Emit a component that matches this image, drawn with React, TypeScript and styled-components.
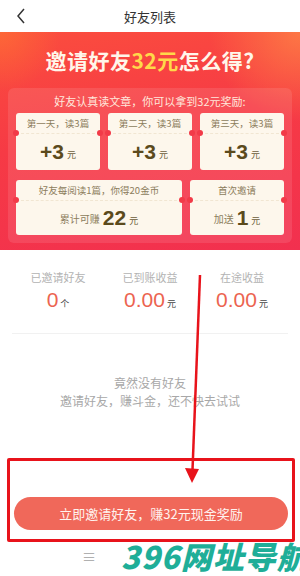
import React from 'react';
import styled, { createGlobalStyle } from 'styled-components';

const GlobalStyle = createGlobalStyle`
  html, body {
    margin: 0;
    padding: 0;
    background: #ffffff;
  }
  body {
    font-family: 'Noto Sans CJK SC', 'Noto Sans', sans-serif;
  }
`;

const Page = styled.div`
  position: relative;
  width: 300px;
  height: 576px;
  overflow: hidden;
  display: flex;
  flex-direction: column;
  background: #ffffff;
`;

const Header = styled.div`
  height: 32px;
  display: flex;
  align-items: center;
  justify-content: center;
  position: relative;
  font-size: 13px;
  color: #333;
`;

const Back = styled.span`
  position: absolute;
  left: 16px;
  top: 6px;
  font-size: 16px;
  color: #333;
`;

const Banner = styled.div`
  height: 218px;
  box-sizing: border-box;
  padding: 14px 8px 7px;
  display: flex;
  flex-direction: column;
  background:
    radial-gradient(circle at 100% 0%, rgba(255, 140, 70, 0.7) 0, rgba(255, 120, 60, 0) 90px),
    radial-gradient(circle at 0% 0%, rgba(255, 120, 50, 0.6) 0, rgba(255, 110, 50, 0) 60px),
    linear-gradient(170deg, #fb4d3e 0%, #f63a45 45%, #f2304f 100%);
`;

const Title = styled.div`
  text-align: center;
  font-size: 21px;
  line-height: 28px;
  font-weight: 700;
  color: #fff6ea;
  letter-spacing: 0.5px;
`;

const Gold = styled.span`
  color: #ffd84a;
`;

const Panel = styled.div`
  margin-top: 14px;
  flex: 1;
  border-radius: 6px;
  background: rgba(255, 255, 255, 0.1);
  padding: 5px 8px 8px;
  display: flex;
  flex-direction: column;
`;

const Sub = styled.div`
  text-align: center;
  font-size: 11px;
  line-height: 16px;
  color: #ffe8dc;
`;

const Row = styled.div<{ $cols: string; $top: number }>`
  display: grid;
  grid-template-columns: ${(p) => p.$cols};
  gap: 8px;
  margin-top: ${(p) => p.$top}px;
`;

const Card = styled.div<{ $h: number }>`
  position: relative;
  height: ${(p) => p.$h}px;
  background: #fdf7ec;
  border-radius: 3px;
  display: flex;
  flex-direction: column;
  &::before,
  &::after {
    content: '';
    position: absolute;
    top: 17px;
    width: 6px;
    height: 6px;
    border-radius: 50%;
    background: #f23a48;
  }
  &::before {
    left: -3px;
  }
  &::after {
    right: -3px;
  }
`;

const CardTop = styled.div`
  height: 20px;
  display: flex;
  align-items: center;
  justify-content: center;
  font-size: 9.5px;
  color: #8c7d5c;
  border-bottom: 1px dashed #f1e6d2;
`;

const CardBottom = styled.div`
  flex: 1;
  display: flex;
  align-items: center;
  justify-content: center;
  gap: 3px;
  color: #8c7d5c;
  font-size: 10px;
`;

const Big = styled.span`
  font-family: 'Liberation Sans', Arial, sans-serif;
  font-size: 21px;
  font-weight: 700;
  color: #5b4a1c;
`;

const Unit = styled.span`
  font-size: 9px;
  color: #6b5c3a;
  margin-top: 5px;
`;

const Stats = styled.div`
  height: 83px;
  display: grid;
  grid-template-columns: repeat(3, 1fr);
  align-items: start;
  border-bottom: 1px solid #f1f1f1;
  margin: 0 12px;
`;

const Stat = styled.div`
  display: flex;
  flex-direction: column;
  align-items: center;
  padding-top: 19px;
`;

const StatLabel = styled.div`
  font-size: 11px;
  line-height: 16px;
  color: #b3b3b3;
`;

const StatValue = styled.div`
  margin-top: 2px;
  display: flex;
  align-items: baseline;
  gap: 2px;
`;

const Num = styled.span`
  font-family: 'Liberation Sans', Arial, sans-serif;
  font-size: 21px;
  line-height: 26px;
  color: #ec6450;
`;

const NumUnit = styled.span`
  font-size: 9px;
  color: #444;
`;

const Empty = styled.div`
  margin-top: 40px;
  text-align: center;
  font-size: 12px;
  line-height: 18px;
  color: #a8a8a8;
`;

const Footer = styled.div`
  margin-top: auto;
  padding: 0 12px 0 14px;
`;

const Button = styled.div`
  height: 33px;
  border-radius: 17px;
  background: #f0685a;
  color: #fff3ef;
  font-size: 13px;
  display: flex;
  align-items: center;
  justify-content: center;
`;

const BottomBar = styled.div`
  height: 46px;
  display: flex;
  align-items: center;
  white-space: nowrap;
`;

const Menu = styled.span`
  flex: none;
  width: 121px;
  padding-left: 82px;
  box-sizing: border-box;
  font-size: 14px;
  color: #b0b0b0;
  margin-top: 6px;
`;

const Watermark = styled.span`
  font-family: 'Noto Sans CJK SC', sans-serif;
  font-size: 31px;
  font-weight: 900;
  font-style: italic;
  color: #1fae98;
  letter-spacing: 1px;
  margin-top: 4px;
`;

const Frame = styled.div`
  position: absolute;
  left: 7px;
  top: 458px;
  width: 282px;
  height: 78px;
  border: 3px solid #e8131b;
  border-radius: 2px;
  pointer-events: none;
`;

const Arrow = styled.svg`
  position: absolute;
  left: 0;
  top: 0;
  pointer-events: none;
`;

export default function App() {
  const day = ['第一天，读3篇', '第二天，读3篇', '第三天，读3篇'];
  return (
    <>
      <GlobalStyle />
      <Page>
        <Header>
          <Back>
            <svg width="10" height="18" viewBox="0 0 10 18">
              <path d="M8 2 L2 9 L8 16" fill="none" stroke="#333" strokeWidth="1.5" />
            </svg>
          </Back>
          好友列表
        </Header>
        <Banner>
          <Title>
            邀请好友<Gold>32元</Gold>怎么得?
          </Title>
          <Panel>
            <Sub>好友认真读文章，你可以拿到32元奖励:</Sub>
            <Row $cols="1fr 1fr 1fr" $top={4}>
              {day.map((d) => (
                <Card key={d} $h={57}>
                  <CardTop>{d}</CardTop>
                  <CardBottom>
                    <Big>+3</Big>
                    <Unit>元</Unit>
                  </CardBottom>
                </Card>
              ))}
            </Row>
            <Row $cols="166px 1fr" $top={10}>
              <Card $h={55}>
                <CardTop>好友每阅读1篇，你得20金币</CardTop>
                <CardBottom>
                  <span>累计可赚</span>
                  <Big>22</Big>
                  <Unit>元</Unit>
                </CardBottom>
              </Card>
              <Card $h={55}>
                <CardTop>首次邀请</CardTop>
                <CardBottom>
                  <span>加送</span>
                  <Big>1</Big>
                  <Unit>元</Unit>
                </CardBottom>
              </Card>
            </Row>
          </Panel>
        </Banner>
        <Stats>
          <Stat>
            <StatLabel>已邀请好友</StatLabel>
            <StatValue>
              <Num>0</Num>
              <NumUnit>个</NumUnit>
            </StatValue>
          </Stat>
          <Stat>
            <StatLabel>已到账收益</StatLabel>
            <StatValue>
              <Num>0.00</Num>
              <NumUnit>元</NumUnit>
            </StatValue>
          </Stat>
          <Stat>
            <StatLabel>在途收益</StatLabel>
            <StatValue>
              <Num>0.00</Num>
              <NumUnit>元</NumUnit>
            </StatValue>
          </Stat>
        </Stats>
        <Empty>
          竟然没有好友
          <br />
          邀请好友，赚斗金，还不快去试试
        </Empty>
        <Footer>
          <Button>立即邀请好友，赚32元现金奖励</Button>
        </Footer>
        <BottomBar>
          <Menu>≡</Menu>
          <Watermark>396网址导航</Watermark>
        </BottomBar>
        <Frame />
        <Arrow width="300" height="576" viewBox="0 0 300 576">
          <line x1="200" y1="275" x2="192.5" y2="470" stroke="#e8131b" strokeWidth="2.5" />
          <polygon points="185,468 199,469 192,483" fill="#e8131b" />
        </Arrow>
      </Page>
    </>
  );
}
